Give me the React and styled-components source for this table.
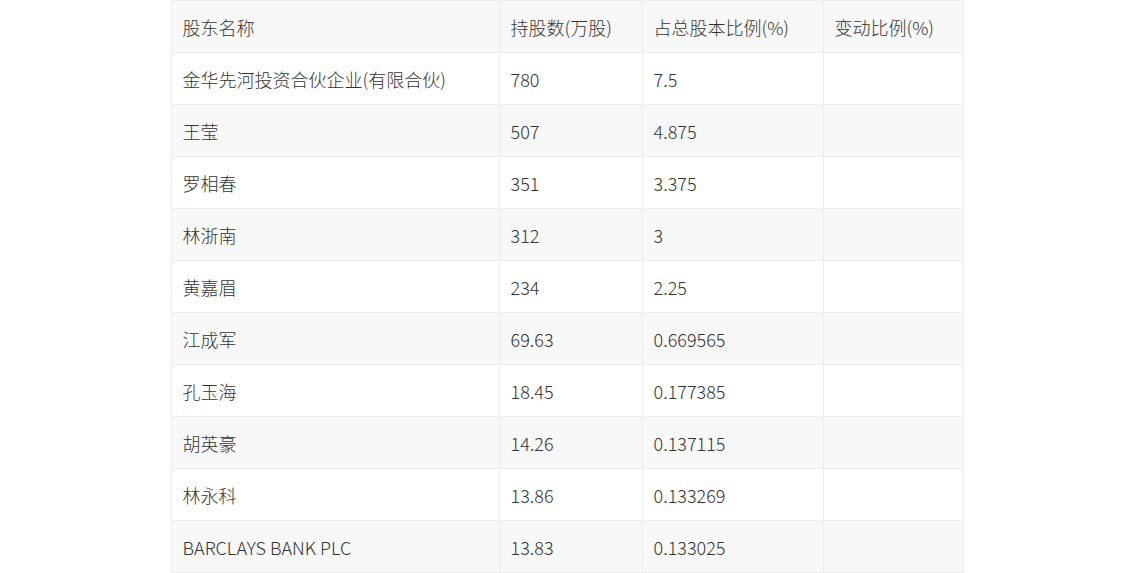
import styled, { createGlobalStyle } from "styled-components";

const GlobalStyle = createGlobalStyle`
  body {
    margin: 0;
    background: #fff;
    font-family: "Noto Sans CJK SC", "Noto Sans", sans-serif;
  }
`;

const Page = styled.div`
  display: flex;
  justify-content: center;
`;

const Table = styled.table`
  width: 792px;
  border-collapse: collapse;
  table-layout: fixed;
  font-size: 18px;
  font-weight: 300;
  color: #333;
`;

const Row = styled.tr`
  height: 52px;
  background: ${(p) => (p.$shade ? "#f8f8f8" : "#fff")};
`;

const Cell = styled.td`
  border: 1px solid #ececec;
  padding: 0 11px;
  white-space: nowrap;
  vertical-align: middle;
  text-align: left;
  font-weight: 300;
`;

const HeadCell = styled(Cell).attrs({ as: "th" })``;

const columns = [
  { title: "股东名称", width: 328 },
  { title: "持股数(万股)", width: 143 },
  { title: "占总股本比例(%)", width: 181 },
  { title: "变动比例(%)", width: 140 },
];

const rows = [
  ["金华先河投资合伙企业(有限合伙)", "780", "7.5", ""],
  ["王莹", "507", "4.875", ""],
  ["罗相春", "351", "3.375", ""],
  ["林浙南", "312", "3", ""],
  ["黄嘉眉", "234", "2.25", ""],
  ["江成军", "69.63", "0.669565", ""],
  ["孔玉海", "18.45", "0.177385", ""],
  ["胡英豪", "14.26", "0.137115", ""],
  ["林永科", "13.86", "0.133269", ""],
  ["BARCLAYS BANK PLC", "13.83", "0.133025", ""],
];

export default function App() {
  return (
    <>
      <GlobalStyle />
      <Page>
        <Table>
          <colgroup>
            {columns.map((c) => (
              <col key={c.title} style={{ width: c.width }} />
            ))}
          </colgroup>
          <thead>
            <Row $shade>
              {columns.map((c) => (
                <HeadCell key={c.title}>{c.title}</HeadCell>
              ))}
            </Row>
          </thead>
          <tbody>
            {rows.map((r, i) => (
              <Row key={r[0]} $shade={i % 2 === 1}>
                {r.map((v, j) => (
                  <Cell key={j}>{v}</Cell>
                ))}
              </Row>
            ))}
          </tbody>
        </Table>
      </Page>
    </>
  );
}
